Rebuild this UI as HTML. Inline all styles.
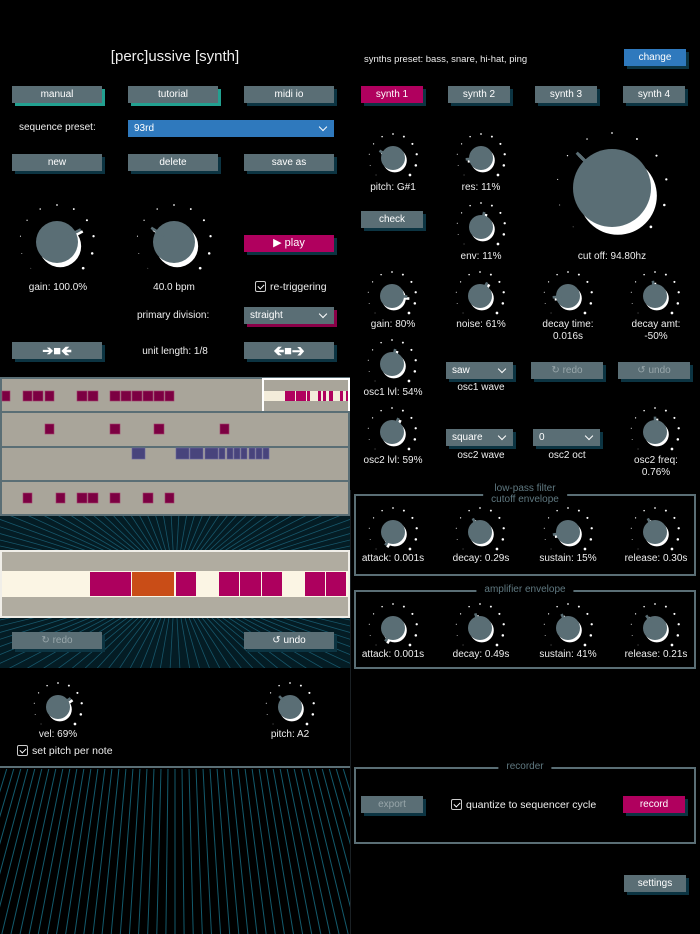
<!DOCTYPE html>
<html><head><meta charset="utf-8">
<style>
*{margin:0;padding:0;box-sizing:border-box}
body{width:700px;height:934px;background:#000;position:relative;overflow:hidden;font-family:"Liberation Sans",sans-serif;color:#fff;font-size:10px}
.a{position:absolute}
.t{position:absolute;white-space:nowrap;transform:translateX(-50%);text-align:center;line-height:12px;font-size:10px;color:#eee}
.b{position:absolute;height:17px;background:#5a6e75;color:#fff;font-size:10px;line-height:17px;text-align:center;box-shadow:3px 3px 0 #0c3442}
.b.dim{color:#98a6aa}
.sel{position:absolute;height:17px;background:#5a6e75;color:#fff;font-size:10px;line-height:17px;padding-left:6px;box-shadow:3px 3px 0 #0c3442}
.sel:after{content:"";position:absolute;right:8px;top:4px;width:5px;height:5px;border-right:1.5px solid #fff;border-bottom:1.5px solid #fff;transform:rotate(45deg)}
.cb{position:absolute;width:11px;height:11px;border:1px solid #ccc;border-radius:2px}
.cb:after{content:"";position:absolute;left:3px;top:1px;width:3px;height:5px;border-right:1.3px solid #fff;border-bottom:1.3px solid #fff;transform:rotate(45deg)}
.box{position:absolute;border:2px solid #5a6e75}
.bt{position:absolute;background:#000;color:#5f7880;font-size:10px;line-height:11px;text-align:center;transform:translateX(-50%);padding:0 8px;white-space:nowrap}
</style></head><body>
<svg id="bg" class="a" style="left:0;top:0" width="700" height="934"></svg>

<div class="t" style="left:175px;top:48px;font-size:15px;line-height:17px">[perc]ussive [synth]</div>
<div class="b" style="left:12px;top:86px;width:90px;box-shadow:3px 3px 0 #22a090">manual</div>
<div class="b" style="left:128px;top:86px;width:90px;box-shadow:3px 3px 0 #22a090">tutorial</div>
<div class="b" style="left:244px;top:86px;width:90px">midi io</div>
<div class="a" style="left:19px;top:122px;color:#eee">sequence preset:</div>
<div class="sel" style="left:128px;top:120px;width:206px;background:#2f79bd;box-shadow:none">93rd</div>
<div class="b" style="left:12px;top:154px;width:90px">new</div>
<div class="b" style="left:128px;top:154px;width:90px">delete</div>
<div class="b" style="left:244px;top:154px;width:90px">save as</div>

<div class="t" style="left:58px;top:282px">gain: 100.0%</div>
<div class="t" style="left:174px;top:282px">40.0 bpm</div>
<div class="b" style="left:244px;top:235px;width:90px;background:#b0005e;font-size:11px">&#9654; play</div>
<div class="cb" style="left:255px;top:281px"></div>
<div class="a" style="left:270px;top:281px;font-size:10.5px;color:#eee">re-triggering</div>
<div class="a" style="left:137px;top:310px;color:#eee">primary division:</div>
<div class="sel" style="left:244px;top:307px;width:90px;box-shadow:3px 3px 0 #8a0048">straight</div>
<div class="b" style="left:12px;top:342px;width:90px;font-size:13px;font-weight:bold">&#10132;&#9632;&#129144;</div>
<div class="t" style="left:175px;top:346px">unit length: 1/8</div>
<div class="b" style="left:244px;top:342px;width:90px;font-size:13px;font-weight:bold">&#129144;&#9632;&#10132;</div>

<div id="seq" class="a" style="left:0;top:377px;width:350px;height:139px;background:#a9a59a;border:2px solid #5a6e75"></div>
<div class="a" style="left:0;top:550px;width:350px;height:68px;background:#b0aca0;border:2px solid #f0eee8"></div>
<div class="a" style="left:2px;top:571px;width:346px;height:26px;background:#fbf5e4"></div>
<div class="a" style="left:262px;top:378px;width:88px;height:35px;border:2px solid #fff;background:#a9a59a"></div>
<div class="a" style="left:264px;top:391px;width:84px;height:10px;background:#f3ecda"></div>

<div class="b dim" style="left:12px;top:632px;width:90px">&#8635; redo</div>
<div class="b" style="left:244px;top:632px;width:90px">&#8634; undo</div>

<div class="t" style="left:58px;top:729px">vel: 69%</div>
<div class="t" style="left:290px;top:729px">pitch: A2</div>
<div class="cb" style="left:17px;top:745px"></div>
<div class="a" style="left:32px;top:745px;color:#eee;font-size:10.5px">set pitch per note</div>

<div class="a" style="left:364px;top:54px;color:#eee;font-size:9.5px">synths preset: bass, snare, hi-hat, ping</div>
<div class="b" style="left:624px;top:49px;width:62px;background:#2f79bd">change</div>
<div class="b" style="left:361px;top:86px;width:62px;background:#b0005e">synth 1</div>
<div class="b" style="left:448px;top:86px;width:62px">synth 2</div>
<div class="b" style="left:535px;top:86px;width:62px">synth 3</div>
<div class="b" style="left:623px;top:86px;width:62px">synth 4</div>
<div class="b" style="left:361px;top:211px;width:62px">check</div>

<div class="t" style="left:393px;top:182px">pitch: G#1</div>
<div class="t" style="left:481px;top:182px">res: 11%</div>
<div class="t" style="left:481px;top:251px">env: 11%</div>
<div class="t" style="left:612px;top:251px">cut off: 94.80hz</div>
<div class="t" style="left:393px;top:319px">gain: 80%</div>
<div class="t" style="left:481px;top:319px">noise: 61%</div>
<div class="t" style="left:568px;top:319px">decay time:<br>0.016s</div>
<div class="t" style="left:656px;top:319px">decay amt:<br>-50%</div>
<div class="t" style="left:393px;top:387px">osc1 lvl: 54%</div>
<div class="sel" style="left:446px;top:362px;width:67px">saw</div>
<div class="t" style="left:481px;top:382px">osc1 wave</div>
<div class="b dim" style="left:531px;top:362px;width:72px">&#8635; redo</div>
<div class="b dim" style="left:618px;top:362px;width:72px">&#8634; undo</div>
<div class="t" style="left:393px;top:455px">osc2 lvl: 59%</div>
<div class="sel" style="left:446px;top:429px;width:67px">square</div>
<div class="t" style="left:481px;top:450px">osc2 wave</div>
<div class="sel" style="left:533px;top:429px;width:67px">0</div>
<div class="t" style="left:567px;top:450px">osc2 oct</div>
<div class="t" style="left:656px;top:455px">osc2 freq:<br>0.76%</div>

<div class="box" style="left:354px;top:494px;width:342px;height:82px"></div>
<div class="bt" style="left:525px;top:483px">low-pass filter<br>cutoff envelope</div>
<div class="t" style="left:393px;top:553px">attack: 0.001s</div>
<div class="t" style="left:481px;top:553px">decay: 0.29s</div>
<div class="t" style="left:568px;top:553px">sustain: 15%</div>
<div class="t" style="left:656px;top:553px">release: 0.30s</div>

<div class="box" style="left:354px;top:590px;width:342px;height:79px"></div>
<div class="bt" style="left:525px;top:584px">amplifier envelope</div>
<div class="t" style="left:393px;top:649px">attack: 0.001s</div>
<div class="t" style="left:481px;top:649px">decay: 0.49s</div>
<div class="t" style="left:568px;top:649px">sustain: 41%</div>
<div class="t" style="left:656px;top:649px">release: 0.21s</div>

<div class="box" style="left:354px;top:767px;width:342px;height:77px"></div>
<div class="bt" style="left:525px;top:761px">recorder</div>
<div class="b dim" style="left:361px;top:796px;width:62px">export</div>
<div class="cb" style="left:451px;top:799px"></div>
<div class="a" style="left:466px;top:799px;color:#eee;font-size:10.5px">quantize to sequencer cycle</div>
<div class="b" style="left:623px;top:796px;width:62px;background:#b0005e">record</div>
<div class="b" style="left:624px;top:875px;width:62px">settings</div>

<svg id="fg" class="a" style="left:0;top:0;pointer-events:none" width="700" height="934"></svg>

<script>
var NS="http://www.w3.org/2000/svg";
function el(p,n,a){var e=document.createElementNS(NS,n);for(var k in a)e.setAttribute(k,a[k]);p.appendChild(e);return e;}
var bg=document.getElementById('bg'),fg=document.getElementById('fg');
var defs=el(bg,'defs',{});
var cp=el(defs,'clipPath',{id:'c1'});el(cp,'rect',{x:0,y:516,width:350,height:34});el(cp,'rect',{x:0,y:618,width:350,height:50});
var cp2=el(defs,'clipPath',{id:'c2'});el(cp2,'rect',{x:0,y:769,width:350,height:165});
el(bg,'rect',{x:0,y:516,width:350,height:152,fill:'#041c24'});
var g=el(bg,'g',{'clip-path':'url(#c1)'});
for(var i=0;i<110;i++){var a=i/110*Math.PI*2;el(g,'line',{x1:175,y1:583,x2:175+400*Math.cos(a),y2:583+400*Math.sin(a)*0.5,stroke:'#17566a','stroke-width':0.8});}
el(bg,'rect',{x:0,y:766,width:350,height:2,fill:'#5a6e75'});
var g2=el(bg,'g',{'clip-path':'url(#c2)'});
for(var k=-50;k<=50;k++){var x=175+7*k;var x2=175+(x-175)*(934-218)/(768-218);el(g2,'line',{x1:x,y1:768,x2:x2,y2:934,stroke:'#135a6c','stroke-width':1});}
el(bg,'rect',{x:350,y:490,width:1,height:444,fill:'#1a2024'});
var seq=el(fg,'g',{});
function r(x1,x2,y,h,f,s){el(seq,'rect',{x:x1,y:y,width:x2-x1,height:h,fill:f,stroke:s||'none','stroke-width':0.6});}
[412,447,481].forEach(function(y){el(seq,'rect',{x:0,y:y-1,width:350,height:2,fill:'#5a6e75'});});
var M='#7c0042',MS='#a4406e';
[[2,10],[23,32],[33,43],[45,54],[77,87],[88,98],[110,120],[121,131],[132,142],[143,153],[154,164],[165,174]].forEach(function(p){r(p[0],p[1],391,10,M,MS)});
[[45,54],[110,120],[154,164],[220,229]].forEach(function(p){r(p[0],p[1],424,10,M,MS)});
[[132,145],[176,189],[190,203],[205,218],[219,225],[227,233],[234,240],[241,247],[249,255],[256,262],[263,269]].forEach(function(p){r(p[0],p[1],448,11,'#48447c','#6a66a0')});
[[23,32],[56,65],[77,87],[88,98],[110,120],[143,153],[165,174]].forEach(function(p){r(p[0],p[1],493,10,M,MS)});
[[285,295],[296,306],[307,310],[318,321],[323,326],[329,333],[340,343],[346,348]].forEach(function(p){r(p[0],p[1],391,10,'#b0005e')});
[[90,131,'#ad005e'],[132,174,'#c94d17'],[176,196,'#ad005e'],[219,239,'#ad005e'],[240,261,'#ad005e'],[262,282,'#ad005e'],[305,325,'#ad005e'],[326,346,'#ad005e']].forEach(function(p){r(p[0],p[1],572,24,p[2])});
function knob(cx,cy,R,ang,dr){
 var g=el(fg,'g',{});
 for(var i=0;i<11;i++){var a=(-135+27*i)*Math.PI/180;var s=0.35+i*0.1;el(g,'circle',{cx:cx+dr*Math.sin(a),cy:cy-dr*Math.cos(a),r:s,fill:'#fff'});}
 var a=ang*Math.PI/180,sx=Math.sin(a),sy=-Math.cos(a);
 var w=R>30?3:2.6, l1=R*0.55, l2=R*1.28;
 el(g,'line',{x1:cx+sx*l1+2,y1:cy+sy*l1+2,x2:cx+sx*l2+2,y2:cy+sy*l2+2,stroke:'#fff','stroke-width':w});
 el(g,'circle',{cx:cx+R*0.15,cy:cy+R*0.2,r:R,fill:'#fff'});
 el(g,'circle',{cx:cx,cy:cy,r:R,fill:'#5a6e75'});
 el(g,'line',{x1:cx+sx*l1,y1:cy+sy*l1,x2:cx+sx*l2,y2:cy+sy*l2,stroke:'#5a6e75','stroke-width':w});
}
knob(57,242,21,62,37);knob(174,242,21,-58,37);
knob(58,707,12,55,24);knob(290,707,12,-45,24);
knob(393,158,12,-62,24);knob(481,158,12,-95,24);knob(481,227,12,12,24);knob(612,188,39,-45,55);
knob(392,296,12,92,24);knob(480,296,12,28,24);knob(568,296,12,-95,24);knob(655,296,12,-8,24);
knob(392,364,12,12,24);knob(392,432,12,25,24);knob(655,432,12,0,24);
knob(393,532,12,-150,24);knob(480,532,12,-28,24);knob(568,532,12,-100,24);knob(655,532,12,-28,24);
knob(393,628,12,-150,24);knob(480,628,12,-18,24);knob(568,628,12,-25,24);knob(655,628,12,-35,24);
</script>
</body></html>
